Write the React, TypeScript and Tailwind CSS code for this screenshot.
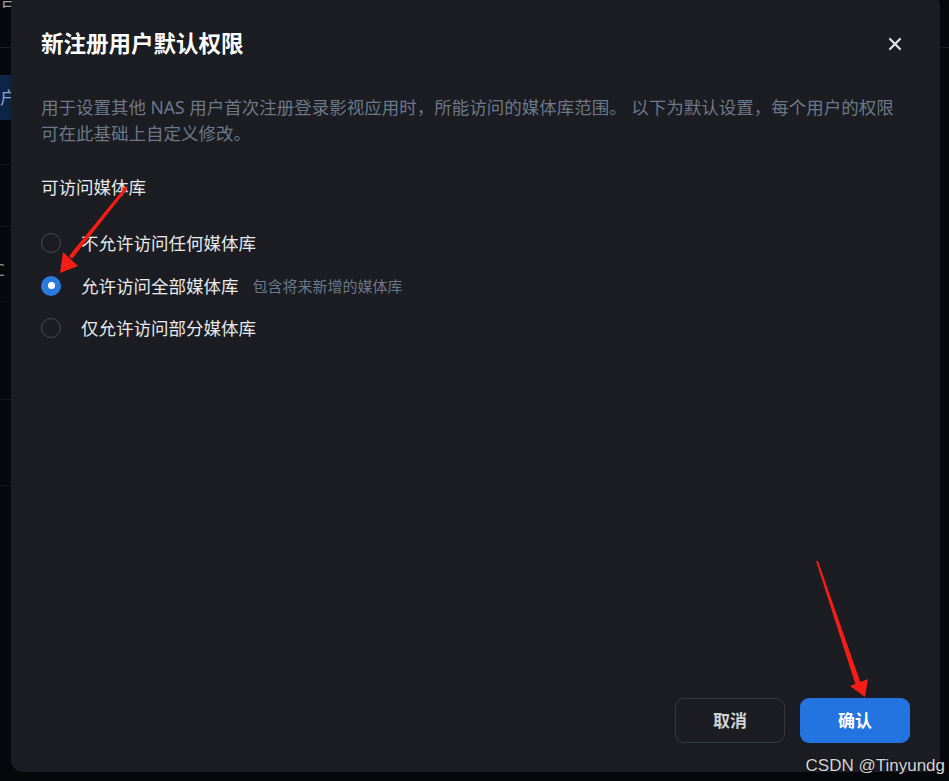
import { X } from "lucide-react"

const font = { fontFamily: '"Noto Sans", "Noto Sans CJK SC", sans-serif' }

type Option = { label: string; hint?: string; checked?: boolean }

const options: Option[] = [
    { label: "不允许访问任何媒体库" },
    { label: "允许访问全部媒体库", hint: "包含将来新增的媒体库", checked: true },
    { label: "仅允许访问部分媒体库" },
]

function Radio({ checked }: { checked?: boolean }) {
    if (checked) {
        return (
            <span className="w-[20px] h-[20px] rounded-full bg-[#2a7be0] flex items-center justify-center shrink-0">
                <span className="w-[7px] h-[7px] rounded-full bg-white" />
            </span>
        )
    }
    return <span className="w-[20px] h-[20px] rounded-full border-[1.5px] border-[#454c58] shrink-0" />
}

function Background() {
    return (
        <div className="flex flex-col text-[#8a8f98] text-[17px]" style={font}>
            <div className="h-[48px] border-b border-[#1a1c21] overflow-hidden">
                <div className="w-[11px] -mt-[10px] leading-[20px] text-[#9aa0a8]">告</div>
            </div>
            <div className="h-[27px]" />
            <div className="w-[11px] h-[45px] bg-[#0c2545] flex items-center text-[#8fa4bf] overflow-hidden">户</div>
            <div className="w-[11px] h-[45px] border-b border-[#15171b]" />
            <div className="w-[11px] h-[62px] border-b border-[#15171b]" />
            <div className="w-[11px] h-[75px] border-b border-[#15171b] flex items-start pt-[30px] -ml-[6px]">C</div>
            <div className="w-[11px] h-[98px] border-b border-[#15171b]" />
            <div className="w-[11px] h-[86px] border-b border-[#15171b]" />
        </div>
    )
}

function Arrows() {
    return (
        <svg className="absolute inset-0 pointer-events-none" width="949" height="781" viewBox="0 0 949 781">
            <polygon points="126,186 128,188 72,259 69,256" fill="#f51d16" />
            <polygon points="60,273 63,252 78,266" fill="#f51d16" />
            <polygon points="816,561 818,561 861,684 856,686" fill="#f51d16" />
            <polygon points="865,697 850,686 868,679" fill="#f51d16" />
        </svg>
    )
}

export default function App() {
    return (
        <div className="relative w-[949px] h-[781px] bg-[#07080b] overflow-hidden" style={font}>
            <Background />

            <div className="absolute left-[11px] top-[-6px] w-[929px] h-[778px] rounded-xl bg-[#1b1d22] flex flex-col px-[30px] pt-[35px] pb-[29px]">
                <div className="flex items-center justify-between h-[30px]">
                    <h2 className="text-[22.5px] leading-[30px] font-bold text-white">新注册用户默认权限</h2>
                    <button className="w-[24px] h-[24px] mr-[3px] flex items-center justify-center text-[#dfe3e8]">
                        <X className="w-[20px] h-[20px]" strokeWidth={2.6} />
                    </button>
                </div>

                <p className="mt-[35px] text-[17.5px] leading-[26px] text-[#6c7889]">
                    用于设置其他 NAS 用户首次注册登录影视应用时，所能访问的媒体库范围。 以下为默认设置，每个用户的权限
                    <br />
                    可在此基础上自定义修改。
                </p>

                <div className="mt-[28px] text-[17.5px] leading-[26px] text-[#e8eaed]">可访问媒体库</div>

                <div className="mt-[22px] flex flex-col">
                    {options.map((option) => (
                        <label key={option.label} className="h-[42.5px] flex items-center gap-[20px]">
                            <Radio checked={option.checked} />
                            <span className="text-[17.5px] text-[#e8eaed]">{option.label}</span>
                            {option.hint && (
                                <span className="-ml-[6px] text-[15px] text-[#6c7889]">{option.hint}</span>
                            )}
                        </label>
                    ))}
                </div>

                <div className="mt-auto flex justify-end gap-[15px]">
                    <button className="w-[110px] h-[45px] rounded-[9px] border border-[#343a41] text-[17px] font-bold text-[#cfd3d8]">
                        取消
                    </button>
                    <button className="w-[110px] h-[45px] rounded-[9px] bg-[#2374e1] text-[17px] font-bold text-white">
                        确认
                    </button>
                </div>
            </div>

            <Arrows />

            <div
                className="absolute right-[4px] bottom-[5px] text-[17px] leading-[20px] text-[#d6d6d6]"
                style={{ fontFamily: '"Liberation Sans", Arial, sans-serif', textShadow: "0 0 2px #000" }}
            >
                CSDN @Tinyundg
            </div>
        </div>
    )
}
